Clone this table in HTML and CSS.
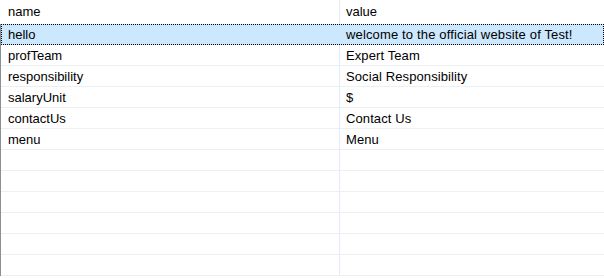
FILE: index.html
```html
<!DOCTYPE html>
<html>
<head>
<meta charset="utf-8">
<link rel="stylesheet" href="styles.css">
</head>
<body>
<div class="table">
  <div class="header">
    <div class="cell name">name</div>
    <div class="cell value">value</div>
  </div>
  <div class="body">
    <div class="row selected"><div class="cell name">hello</div><div class="cell value">welcome to the official website of Test!</div></div>
    <div class="row"><div class="cell name">profTeam</div><div class="cell value">Expert Team</div></div>
    <div class="row"><div class="cell name">responsibility</div><div class="cell value">Social Responsibility</div></div>
    <div class="row"><div class="cell name">salaryUnit</div><div class="cell value">$</div></div>
    <div class="row"><div class="cell name">contactUs</div><div class="cell value">Contact Us</div></div>
    <div class="row"><div class="cell name">menu</div><div class="cell value">Menu</div></div>
    <div class="row"><div class="cell name"></div><div class="cell value"></div></div>
    <div class="row"><div class="cell name"></div><div class="cell value"></div></div>
    <div class="row"><div class="cell name"></div><div class="cell value"></div></div>
    <div class="row"><div class="cell name"></div><div class="cell value"></div></div>
    <div class="row"><div class="cell name"></div><div class="cell value"></div></div>
    <div class="row"><div class="cell name"></div><div class="cell value"></div></div>
  </div>
</div>
</body>
</html>
```
FILE: styles.css
```css
html, body {
  margin: 0;
  padding: 0;
  background: #fff;
  width: 604px;
  height: 278px;
  overflow: hidden;
}
.table {
  font-family: "Liberation Sans", Arial, sans-serif;
  font-size: 13px;
  color: #000;
}
.header {
  display: grid;
  grid-template-columns: 340px 1fr;
  height: 24px;
}
.header .cell {
  line-height: 24px;
}
.header .name {
  padding-left: 8px;
  border-right: 1px solid #e3ebf6;
}
.header .value {
  padding-left: 6px;
}
.body {
  border-left: 1px solid #8a8f98;
}
.row {
  display: grid;
  grid-template-columns: 339px 1fr;
  height: 21px;
  box-sizing: border-box;
  border-bottom: 1px solid #eeeff1;
}
.row .cell {
  line-height: 22px;
  white-space: nowrap;
}
.row .name {
  padding-left: 7px;
  border-right: 1px solid #e3ebf6;
}
.row .value {
  padding-left: 6px;
  letter-spacing: 0.1px;
}
.row.selected {
  background: #cce8ff;
  border: 1px dotted #000;
  grid-template-columns: 338px 1fr;
}
.row.selected .cell {
  line-height: 19px;
}
.row.selected .name {
  padding-left: 6px;
  border-right: 1px solid #cce8ff;
}
.row.selected .value {
  letter-spacing: 0.15px;
}
```
